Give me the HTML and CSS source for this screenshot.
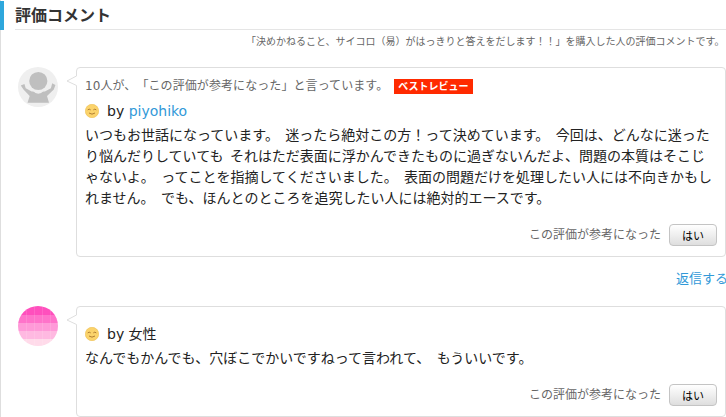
FILE: index.html
```html
<!DOCTYPE html>
<html lang="ja">
<head>
<meta charset="utf-8">
<title>評価コメント</title>
<link rel="stylesheet" href="styles.css">
</head>
<body>
<main class="page">
  <h1 class="title">評価コメント</h1>
  <p class="lead">「決めかねること、サイコロ（易）がはっきりと答えをだします！！」を購入した人の評価コメントです。</p>

  <article class="review">
    <svg class="avatar" viewBox="0 0 40 40">
      <circle cx="20" cy="20" r="20" fill="#efefef"/>
      <path d="M2.800 18.500L6.400 17l1.300 4.300 6 3.200h13.200l6-3.200L34.200 16.300l3.200 1.700-1.600 4.500-6.800 6.500 2 6.800H9.500l2.200-6.800-6.200-6.500z" fill="#bfbfbf"/>
      <path d="M15.500 23.500q4.800 5 9.600 0" fill="#efefef" stroke="#efefef" stroke-width="1.500"/>
      <circle cx="20.300" cy="14" r="9.100" fill="#bfbfbf"/>
    </svg>
    <div class="card card-best">
      <svg class="tail" viewBox="0 0 11 20"><path d="M10.500 2L1 7l9.500 4.500H12V2z" fill="#fff"/><path d="M10.500 2L1 7l9.500 4.500" fill="none" stroke="#dedede"/></svg>
      <p class="votes">10人が、「この評価が参考になった」と言っています。<span class="badge">ベストレビュー</span></p>
      <p class="byline">
        <svg class="face" viewBox="0 0 14 14"><circle cx="7" cy="7" r="6.700" fill="#fbd36b" stroke="#edbd50" stroke-width=".6"/><path d="M2.700 5.900q1.500-1.500 3 0M8.300 5.900q1.500-1.500 3 0M4 9q3 2.300 6 0" fill="none" stroke="#a8752c" stroke-width=".9"/></svg>
        <span>by <a class="link">piyohiko</a></span>
      </p>
      <p class="comment">いつもお世話になっています。 迷ったら絶対この方！って決めています。 今回は、どんなに迷った<br>り悩んだりしていても それはただ表面に浮かんできたものに過ぎないんだよ、問題の本質はそこじ<br>ゃないよ。 ってことを指摘してくださいました。 表面の問題だけを処理したい人には不向きかもし<br>れません。 でも、ほんとのところを追究したい人には絶対的エースです。</p>
      <div class="helpful"><span>この評価が参考になった</span><button class="yes">はい</button></div>
    </div>
  </article>
  <div class="reply"><a class="link">返信する</a></div>

  <article class="review">
    <svg class="avatar" viewBox="0 0 40 40">
      <clipPath id="disc"><circle cx="20" cy="20" r="20"/></clipPath>
      <g clip-path="url(#disc)">
        <path fill="#ff4fbd" d="M0 0h40v9H0z"/>
        <path fill="#ff73ca" d="M0 9h40v8H0z"/>
        <path fill="#ff9ad8" d="M0 17h40v8H0z"/>
        <path fill="#ffb9e1" d="M0 25h40v8H0z"/>
        <path fill="#ffdbea" d="M0 33h40v7H0z"/>
        <path d="M8.500 0v40M16.500 0v40M24.500 0v40M32.500 0v40" stroke="#fff" stroke-opacity=".12"/>
      </g>
    </svg>
    <div class="card">
      <svg class="tail" viewBox="0 0 11 20"><path d="M10.500 2L1 7l9.500 4.500H12V2z" fill="#fff"/><path d="M10.500 2L1 7l9.500 4.500" fill="none" stroke="#dedede"/></svg>
      <p class="byline">
        <svg class="face" viewBox="0 0 14 14"><circle cx="7" cy="7" r="6.700" fill="#fbd36b" stroke="#edbd50" stroke-width=".6"/><path d="M2.700 5.900q1.500-1.500 3 0M8.300 5.900q1.500-1.500 3 0M4 9q3 2.300 6 0" fill="none" stroke="#a8752c" stroke-width=".9"/></svg>
        <span>by 女性</span>
      </p>
      <p class="comment">なんでもかんでも、穴ぼこでかいですねって言われて、 もういいです。</p>
      <div class="helpful"><span>この評価が参考になった</span><button class="yes">はい</button></div>
    </div>
  </article>
</main>
</body>
</html>
```
FILE: styles.css
```css
* {
  box-sizing: border-box;
}

body {
  margin: 0;
  overflow: hidden;
  background: #fff;
  color: #222;
  font-family: "DejaVu Sans", "Noto Sans CJK JP", sans-serif;
  font-size: 14px;
  text-spacing-trim: space-all;
}

p, h1 {
  margin: 0;
  white-space: nowrap;
}

.page {
  height: 417px;
  padding-top: 1px;
  border-left: 1px solid #dedede;
}

.title {
  height: 29px;
  margin-left: -1px;
  padding-left: 11px;
  border-left: 4px solid #2ea7dc;
  background: linear-gradient(#e5e5e5, #e5e5e5) 11px 100% / 100% 1px no-repeat;
  color: #333;
  font-size: 16px;
  line-height: 30px;
}

.lead {
  height: 37px;
  padding-left: 245px;
  color: #666;
  font-size: 10px;
  line-height: 23px;
}

.review {
  display: flex;
  align-items: flex-start;
  padding-left: 17px;
}

.avatar {
  width: 40px;
  height: 40px;
  margin-right: 18px;
  flex: none;
}

.card {
  position: relative;
  flex: 1;
  height: 111px;
  padding: 17px 8px 0 8px;
  border: 1px solid #dedede;
  border-radius: 4px;
}

.card-best {
  height: 190px;
  padding-top: 7px;
}

.tail {
  position: absolute;
  top: 6px;
  left: -11px;
  width: 11px;
  height: 20px;
}

.votes {
  display: flex;
  align-items: center;
  gap: 6px;
  height: 22px;
  margin-bottom: 4px;
  color: #666;
  font-size: 12px;
  letter-spacing: .08px;
  line-height: 22px;
}

.badge {
  height: 15px;
  padding: 0 4px;
  background: #ff2a00;
  color: #fff;
  font-size: 10px;
  font-weight: bold;
  letter-spacing: 0;
  line-height: 15px;
}

.byline {
  display: flex;
  align-items: center;
  gap: 8px;
  height: 20px;
  margin-bottom: 4px;
  line-height: 20px;
}

.face {
  width: 14px;
  height: 14px;
}

.link {
  color: #3299d8;
}

.comment {
  line-height: 21px;
  word-spacing: 2px;
}

.helpful {
  display: flex;
  justify-content: flex-end;
  align-items: center;
  gap: 8px;
  margin-top: 15px;
  color: #666;
  font-size: 12px;
  line-height: 22px;
}

.yes {
  width: 48px;
  height: 22px;
  padding: 0;
  border: 1px solid #c4c4c4;
  border-radius: 4px;
  background: linear-gradient(#fff, #dedede);
  color: #000;
  font: 11px/18px "Noto Sans CJK JP", sans-serif;
}

.reply {
  height: 49px;
  padding-left: 675px;
  font-size: 13px;
  line-height: 43px;
  white-space: nowrap;
}
```
